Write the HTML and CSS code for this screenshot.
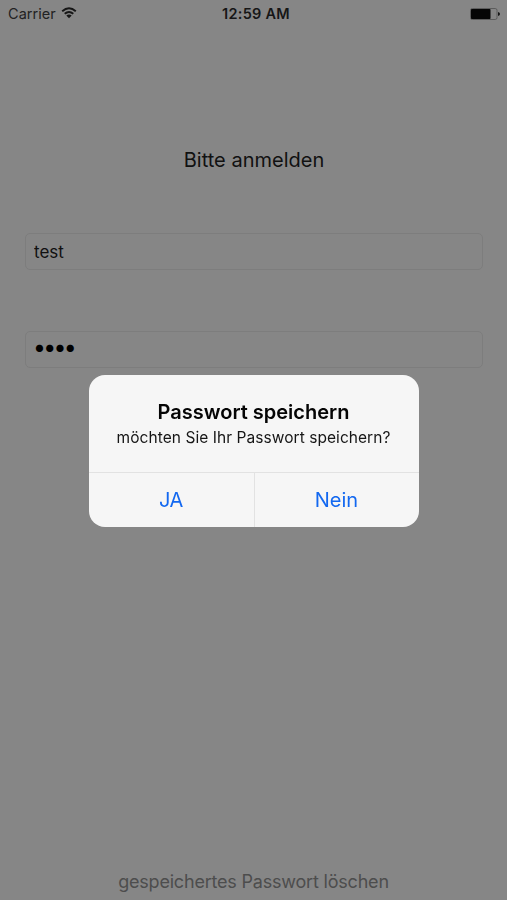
FILE: index.html
```html
<!DOCTYPE html>
<html lang="de">
<head>
    <meta charset="UTF-8">
    <meta name="viewport" content="width=device-width, initial-scale=1.0">
    <title>Bitte anmelden</title>
    <link rel="stylesheet" href="styles.css">
</head>
<body>
    <div class="screen">
        <header class="status-bar">
            <div class="carrier">
                <span>Carrier</span>
                <svg class="wifi" width="16" height="12" viewBox="0 0 16 12">
                    <path d="M1.2 4.3 Q8 -1.7 14.8 4.3 M3.7 6.8 Q8 3.1 12.3 6.8" fill="none" stroke="#161616" stroke-width="1.9"/>
                    <path d="M5.3 8.6 Q8 6.4 10.7 8.6 L8 11.3 Z" fill="#161616"/>
                </svg>
            </div>
            <span class="time">12:59 AM</span>
            <svg class="battery" width="30" height="12" viewBox="0 0 30 12">
                <rect x="0.5" y="0.5" width="26.5" height="11" rx="1.8" fill="none" stroke="#5c5c5c"/>
                <rect x="1" y="1" width="19.5" height="10" rx="0.8" fill="#050505"/>
                <path d="M28 4 Q30 4.4 30 6 Q30 7.6 28 8 Z" fill="#161616"/>
            </svg>
        </header>

        <form class="login">
            <h1>Bitte anmelden</h1>
            <input type="text" class="field" value="test">
            <input type="password" class="field password" value="test">
        </form>

        <button class="delete-button">gespeichertes Passwort löschen</button>
    </div>

    <div class="overlay">
        <div class="alert" role="alertdialog">
            <div class="alert-body">
                <h2>Passwort speichern</h2>
                <p>möchten Sie Ihr Passwort speichern?</p>
            </div>
            <div class="alert-actions">
                <button>JA</button>
                <button>Nein</button>
            </div>
        </div>
    </div>
</body>
</html>
```
FILE: styles.css
```css
* {
    box-sizing: border-box;
}

body {
    margin: 0;
    font-family: 'Inter', sans-serif;
    background: #868686;
    color: #111;
}

button,
input {
    font-family: inherit;
    background: none;
    border: none;
    padding: 0;
}

.screen {
    height: 100vh;
    display: flex;
    flex-direction: column;
}

.status-bar {
    height: 27px;
    padding: 0 7px 0 8px;
    display: grid;
    grid-template-columns: 1fr auto 1fr;
    align-items: center;
    font-size: 14.5px;
    color: #222;
}

.carrier {
    display: flex;
    align-items: center;
    gap: 5px;
    letter-spacing: 0.05px;
}

.wifi {
    margin-top: -2px;
}

.time {
    padding-left: 4px;
    font-weight: 600;
    letter-spacing: 0.25px;
    color: #161616;
}

.battery {
    justify-self: end;
}

.login {
    display: flex;
    flex-direction: column;
    padding: 120px 24px 0 25px;
}

.login h1 {
    margin: 0 0 60px;
    font-size: 20px;
    line-height: 26px;
    font-weight: 400;
    text-align: center;
}

.field {
    height: 37px;
    padding: 0 8px;
    border: 1px solid #7d7d7d;
    border-radius: 5px;
    font-size: 17px;
    color: #111;
    outline: none;
}

.password {
    margin-top: 61px;
    padding: 0 7px 5px;
    font-size: 23px;
    letter-spacing: -2.7px;
    color: #000;
}

.delete-button {
    margin-top: auto;
    padding-bottom: 6px;
    font-size: 18px;
    line-height: 24px;
    letter-spacing: -0.2px;
    color: #4d4d4d;
}

/* Alert dialog */
.overlay {
    position: fixed;
    inset: 0;
    padding-top: 2px;
    display: flex;
    align-items: center;
    justify-content: center;
}

.alert {
    width: 330px;
    height: 152px;
    display: flex;
    flex-direction: column;
    background: #f6f6f6;
    border-radius: 16px;
    overflow: hidden;
    text-align: center;
}

.alert-body {
    flex: 1;
    padding-top: 24px;
}

.alert h2 {
    margin: 0;
    font-size: 20px;
    line-height: 26px;
    font-weight: 600;
    color: #050505;
}

.alert p {
    margin: 3px 0 0;
    font-size: 15.5px;
    line-height: 20px;
    letter-spacing: 0.06px;
    color: #161616;
}

.alert-actions {
    display: grid;
    grid-template-columns: 1fr 1fr;
    height: 55px;
    border-top: 1px solid #e2e2e2;
}

.alert-actions button {
    font-size: 20px;
    color: #1368f0;
}

.alert-actions button:first-child {
    letter-spacing: -0.5px;
}

.alert-actions button + button {
    border-left: 1px solid #e2e2e2;
}
```
